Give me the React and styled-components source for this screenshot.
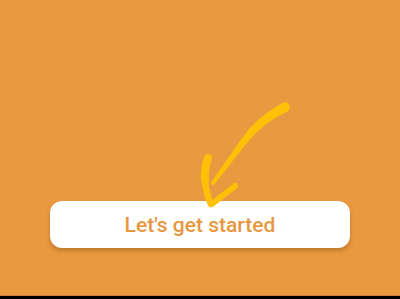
import React from 'react';
import styled, { createGlobalStyle } from 'styled-components';

const GlobalStyle = createGlobalStyle`
  html, body {
    margin: 0;
    padding: 0;
    background: #000;
  }
  body {
    font-family: Roboto, "Noto Sans", sans-serif;
  }
`;

const Screen = styled.div`
  position: relative;
  width: 400px;
  height: 296px;
  background: #e9993f;
  border-bottom: 1px solid #c98236;
  display: flex;
  flex-direction: column;
  justify-content: flex-end;
  align-items: center;
  padding-bottom: 47px;
  box-sizing: border-box;
`;

const StartButton = styled.button`
  width: 300px;
  height: 47px;
  border: none;
  border-radius: 12px;
  background: #fff;
  color: #e8963f;
  font-family: Roboto, sans-serif;
  font-weight: 500;
  font-size: 21px;
  box-shadow: 0 3px 4px rgba(120, 60, 0, 0.35);
  cursor: pointer;
`;

const Arrow = styled.svg`
  position: absolute;
  left: 0;
  top: 0;
  width: 400px;
  height: 299px;
  pointer-events: none;
`;

// hand-drawn arrow, shaft is a filled tapered stroke
const ArrowDoodle = () => (
  <Arrow viewBox="0 0 400 299" fill="none" stroke="#ffc107" strokeLinecap="round" strokeLinejoin="round">
    <path
      d="M287.7 111.2 Q274 118 264.7 125.3 Q255 133 247.7 142.3 L232.2 161.6 L214.6 184.2 A2 2 0 0 1 211.4 181.8 L227.8 158.4 L242.3 137.7 Q250 127 259.3 118.7 Q270 110 282.3 102.8 A5 5 0 0 1 287.7 111.2 Z"
      fill="#ffc107"
      stroke="none"
    />
    <path d="M208 158 Q204 170 205 180" strokeWidth="8" />
    <path d="M205 180 Q206 194 211 204" strokeWidth="6.5" />
    <path d="M235 186 L212 204" strokeWidth="6" />
  </Arrow>
);

export default function App() {
  return (
    <>
      <GlobalStyle />
      <Screen>
        <StartButton>Let's get started</StartButton>
        <ArrowDoodle />
      </Screen>
    </>
  );
}
